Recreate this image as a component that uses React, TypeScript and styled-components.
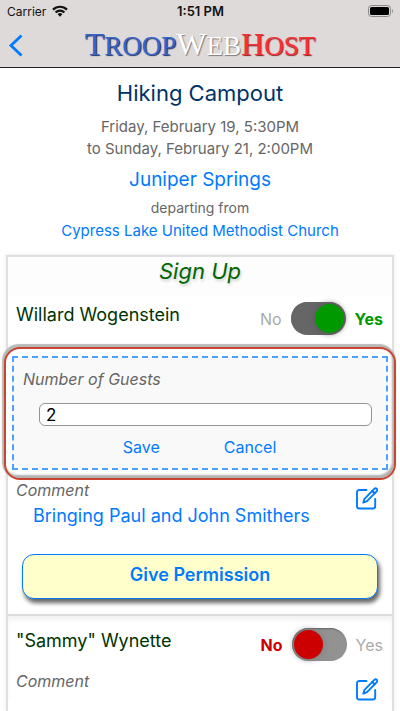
import React from "react";
import styled, { createGlobalStyle } from "styled-components";

const BLUE = "#007aff";

const GlobalStyle = createGlobalStyle`
  * { box-sizing: border-box; }
  body {
    margin: 0;
    background: #fff;
    font-family: Inter, "Liberation Sans", sans-serif;
    color: #666;
  }
  button, input { font: inherit; }
  h1, h2, h3, p { margin: 0; font-weight: 400; }
`;

const Page = styled.div`
  display: flex;
  flex-direction: column;
  min-height: 100vh;
`;

const Header = styled.header`
  background: #dedad9;
  border-bottom: 1px solid #222;
`;

const StatusBar = styled.div`
  display: grid;
  grid-template-columns: 1fr auto 1fr;
  align-items: center;
  height: 22px;
  padding: 0 6px 0 7px;
  font-size: 12px;
  color: #111;
`;

const Carrier = styled.span`
  display: flex;
  align-items: center;
  gap: 6px;
`;

const Clock = styled.span`
  font-size: 13px;
  font-weight: 600;
`;

const Battery = styled.svg`
  justify-self: end;
`;

const NavBar = styled.div`
  display: grid;
  grid-template-columns: 40px 1fr 40px;
  align-items: center;
  height: 45px;
`;

const BackButton = styled.button`
  display: flex;
  align-items: center;
  height: 40px;
  padding: 0 0 0 8px;
  border: 0;
  background: none;
  color: ${BLUE};
`;

const Logo = styled.div`
  font-family: "Liberation Serif", serif;
  font-size: 27px;
  line-height: 44px;
  text-align: center;
  white-space: nowrap;
`;

const LogoWord = styled.span<{ $color: string; $shade: string }>`
  display: inline-block;
  color: ${(p) => p.$color};
  text-shadow: 1px 1px 1px ${(p) => p.$shade};
  &::first-letter { font-size: 32px; }
`;

const EventInfo = styled.section`
  display: flex;
  flex-direction: column;
  align-items: center;
  padding: 9px 8px 11px;
  text-align: center;
`;

const EventTitle = styled.h1`
  font-size: 22px;
  line-height: 32px;
  color: #003366;
`;

const EventDates = styled.p`
  padding: 7px 0 5px;
  font-size: 15px;
  line-height: 22px;
`;

const Departing = styled.p`
  padding-top: 3px;
  font-size: 14px;
  line-height: 20px;
`;

const PlaceLink = styled.a<{ $large?: boolean }>`
  font-size: ${(p) => (p.$large ? 19 : 15)}px;
  line-height: ${(p) => (p.$large ? 30 : 26)}px;
  color: ${BLUE};
  text-decoration: none;
`;

const SignUpPanel = styled.main`
  display: flex;
  flex: 1;
  flex-direction: column;
  margin: 0 6px;
  border: 2px solid #e0e0e0;
  border-bottom: 0;
  box-shadow: 0 0 4px #e8e8e8;
`;

const PanelTitle = styled.h2`
  height: 40px;
  background: #fdfdfd;
  font-size: 22px;
  line-height: 28px;
  font-style: italic;
  text-align: center;
  color: #006600;
  text-shadow: 1px 2px 3px #ccc;
`;

const Member = styled.section`
  & + & {
    border-top: 2px solid #ddd;
    box-shadow: inset 0 4px 4px #f2f2f2;
  }
`;

const MemberHead = styled.div<{ $tall?: boolean }>`
  display: flex;
  justify-content: space-between;
  height: ${(p) => (p.$tall ? 50 : 55)}px;
  padding: ${(p) => (p.$tall ? 5 : 12)}px 9px 0 8px;
`;

const MemberName = styled.h3`
  font-size: 18px;
  line-height: 26px;
  color: #003300;
`;

const Attendance = styled.label`
  display: flex;
  align-items: center;
  gap: 9px;
  height: 33px;
  font-size: 16px;
`;

const Choice = styled.span<{ $color?: string }>`
  color: ${(p) => p.$color ?? "#aaa"};
  font-weight: ${(p) => (p.$color ? 700 : 400)};
`;

const Switch = styled.input`
  appearance: none;
  display: flex;
  align-items: center;
  width: 55px;
  height: 33px;
  margin: 0;
  padding: 2px;
  border-radius: 17px;
  background: #929292;
  box-shadow: inset 1px 1px 2px #666;
  &::before {
    content: "";
    width: 29px;
    height: 29px;
    border-radius: 50%;
    background: #cc0000;
    box-shadow: 0 0 6px #777;
  }
  &:checked {
    justify-content: flex-end;
    background: #666;
  }
  &:checked::before {
    background: #009900;
    box-shadow: 0 0 6px #555;
  }
`;

const Highlight = styled.div`
  margin: 0 -4px;
  padding: 7px 6px 8px;
  border: 2px solid #c8452f;
  border-radius: 16px;
  background: #fff;
  box-shadow: -1px -2px 1px 1px #b8b8b8, inset -2px -3px 2px #b0b0b0;
`;

const GuestForm = styled.form`
  display: flex;
  flex-direction: column;
  padding: 11px 14px 8px 9px;
  border: 2px dashed #4da1ff;
  background: #f9f9f9;
`;

const FieldLabel = styled.label`
  font-size: 16px;
  line-height: 20px;
  font-style: italic;
`;

const GuestInput = styled.input`
  height: 23px;
  min-width: 0;
  margin: 14px 0 0 16px;
  padding: 0 6px;
  border: 1px solid #949494;
  border-radius: 6px;
  background: #fff;
  font-size: 17px;
  color: #000;
`;

const FormActions = styled.div`
  display: flex;
  justify-content: center;
  gap: 64px;
  padding: 9px 0 1px 4px;
`;

const TextButton = styled.button`
  padding: 0;
  border: 0;
  background: none;
  font-size: 16px;
  line-height: 24px;
  color: ${BLUE};
`;

const CommentRow = styled.div`
  display: flex;
  justify-content: space-between;
  align-items: flex-start;
  padding: 0 14px 0 8px;
`;

const CommentLabel = styled.p`
  font-size: 16px;
  line-height: 20px;
  font-style: italic;
`;

const CommentText = styled.p`
  padding-left: 17px;
  font-size: 18px;
  line-height: 32px;
  color: ${BLUE};
`;

const EditButton = styled.button`
  display: flex;
  margin-top: 7px;
  padding: 0;
  border: 0;
  background: none;
  color: ${BLUE};
`;

const PermissionButton = styled.button`
  display: block;
  width: calc(100% - 28px);
  height: 45px;
  margin: 22px 14px 15px;
  padding: 0 0 5px;
  border: 1px solid ${BLUE};
  border-radius: 12px;
  background: #ffffcc;
  box-shadow: 2px 4px 4px #666;
  font-size: 18px;
  font-weight: 600;
  color: ${BLUE};
`;

function EditIcon() {
  return (
    <svg width="22" height="23" viewBox="0 0 22 23" fill="none" stroke="currentColor" strokeWidth="1.900" strokeLinecap="round" strokeLinejoin="round" aria-hidden="true">
      <path d="M10.500 3H3.200A2.200 2.200 0 0 0 1 5.200V19.300A2.200 2.200 0 0 0 3.200 21.500H17A2.200 2.200 0 0 0 19.200 19.300V12" />
      <path d="M7.300 15.600L8.500 11.800L18.300 1.800A1.700 1.700 0 0 1 20.800 4.200L11 14.200Z" />
      <path d="M16.300 4L18.700 6.300" />
    </svg>
  );
}

function SignUpSwitch({ member, attending }: { member: string; attending: boolean }) {
  return (
    <Attendance>
      <Choice $color={attending ? undefined : "#cc0000"}>No</Choice>
      <Switch type="checkbox" role="switch" aria-label={`${member} attending`} defaultChecked={attending} />
      <Choice $color={attending ? "#009900" : undefined}>Yes</Choice>
    </Attendance>
  );
}

export default function App() {
  return (
    <>
      <GlobalStyle />
      <Page>
        <Header>
          <StatusBar>
            <Carrier>
              Carrier
              <svg width="16" height="12" viewBox="0 0 16 12" fill="none" stroke="currentColor" strokeWidth="2.200" aria-hidden="true">
                <path d="M1 4.600a10 10 0 0 1 14 0M3.600 7.500a6.200 6.200 0 0 1 8.800 0" />
                <path d="M8 11.800L5.600 9.300a3.400 3.400 0 0 1 4.800 0Z" fill="currentColor" stroke="none" />
              </svg>
            </Carrier>
            <Clock>1:51 PM</Clock>
            <Battery width="26" height="12" viewBox="0 0 26 12" aria-hidden="true">
              <rect x="0.500" y="0.500" width="22" height="11" rx="3" fill="none" stroke="#8b8988" />
              <rect x="2" y="2" width="19" height="8" rx="1.600" fill="#000" />
              <path d="M24 4v4c1.300-.5 1.300-3.500 0-4Z" fill="#8b8988" />
            </Battery>
          </StatusBar>
          <NavBar>
            <BackButton type="button" aria-label="Back">
              <svg width="15" height="23" viewBox="0 0 15 23" fill="none" stroke="currentColor" strokeWidth="2.800" aria-hidden="true">
                <path d="M13.500 1.500L3 11.500L13.500 21.500" />
              </svg>
            </BackButton>
            <Logo>
              <LogoWord $color="#3565cd" $shade="#1c2f66">TROOP</LogoWord>
              <LogoWord $color="#ffffff" $shade="#777777">WEB</LogoWord>
              <LogoWord $color="#fb3037" $shade="#8c1b20">HOST</LogoWord>
            </Logo>
          </NavBar>
        </Header>

        <EventInfo>
          <EventTitle>Hiking Campout</EventTitle>
          <EventDates>
            Friday, February 19, 5:30PM
            <br />
            to Sunday, February 21, 2:00PM
          </EventDates>
          <PlaceLink href="#springs" $large>Juniper Springs</PlaceLink>
          <Departing>departing from</Departing>
          <PlaceLink href="#church">Cypress Lake United Methodist Church</PlaceLink>
        </EventInfo>

        <SignUpPanel>
          <PanelTitle>Sign Up</PanelTitle>

          <Member>
            <MemberHead $tall>
              <MemberName>Willard Wogenstein</MemberName>
              <SignUpSwitch member="Willard Wogenstein" attending />
            </MemberHead>
            <Highlight>
              <GuestForm>
                <FieldLabel htmlFor="guests">Number of Guests</FieldLabel>
                <GuestInput id="guests" type="text" inputMode="numeric" defaultValue="2" />
                <FormActions>
                  <TextButton type="button">Save</TextButton>
                  <TextButton type="button">Cancel</TextButton>
                </FormActions>
              </GuestForm>
            </Highlight>
            <CommentRow>
              <div>
                <CommentLabel>Comment</CommentLabel>
                <CommentText>Bringing Paul and John Smithers</CommentText>
              </div>
              <EditButton type="button" aria-label="Edit comment"><EditIcon /></EditButton>
            </CommentRow>
            <PermissionButton type="button">Give Permission</PermissionButton>
          </Member>

          <Member>
            <MemberHead>
              <MemberName>"Sammy" Wynette</MemberName>
              <SignUpSwitch member="Sammy Wynette" attending={false} />
            </MemberHead>
            <CommentRow>
              <CommentLabel>Comment</CommentLabel>
              <EditButton type="button" aria-label="Edit comment"><EditIcon /></EditButton>
            </CommentRow>
          </Member>
        </SignUpPanel>
      </Page>
    </>
  );
}
